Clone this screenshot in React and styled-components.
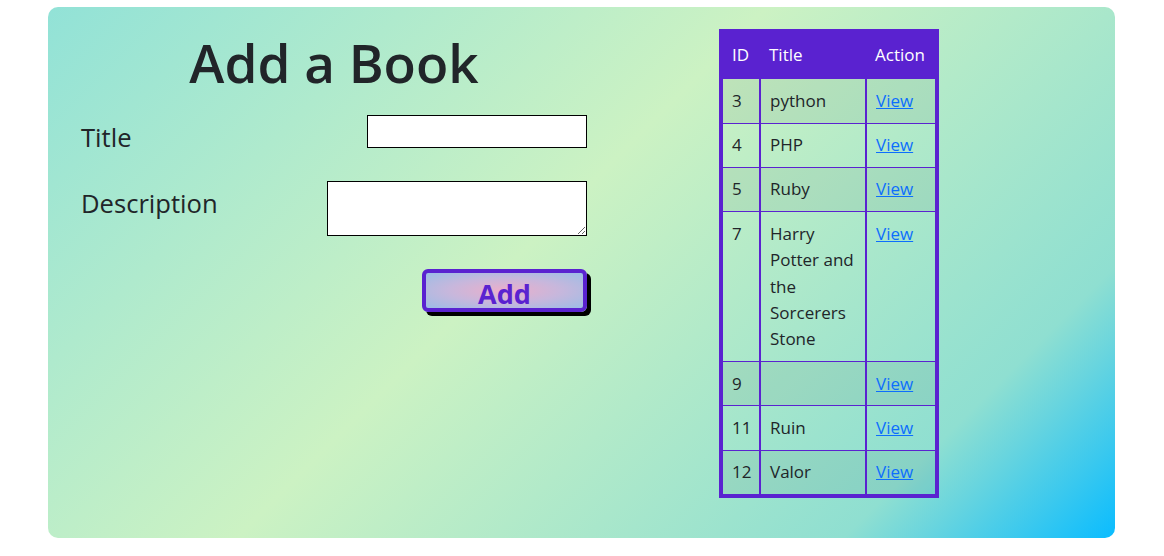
import React from "react";
import styled, { createGlobalStyle } from "styled-components";

const Global = createGlobalStyle`
  html, body { margin: 0; padding: 0; background: #ffffff; }
  body { font-family: "Open Sans", "Noto Sans", sans-serif; color: #212529; }
  * { box-sizing: border-box; }
`;

const Page = styled.div`
  padding: 7px 49px 18px 48px;
`;

const Card = styled.div`
  display: flex;
  align-items: flex-start;
  height: 531px;
  border-radius: 10px;
  background: linear-gradient(135deg, #92e2d7 0%, #ccf2c3 45%, #8fdfd1 83%, #0abcff 100%);
`;

const FormColumn = styled.div`
  display: flex;
  flex-direction: column;
  width: 506px;
  margin-left: 33px;
  padding-top: 22px;
`;

const Heading = styled.h1`
  margin: 0;
  font-size: 53px;
  line-height: 68px;
  font-weight: 600;
  text-align: center;
  color: #212529;
`;

const FieldRow = styled.div`
  display: flex;
  justify-content: space-between;
  align-items: flex-start;
  margin-top: ${(p) => p.$gap}px;
`;

const Label = styled.label`
  padding-top: 7px;
  font-size: 25.6px;
  line-height: 31px;
  color: #212529;
`;

const TextInput = styled.input`
  width: 220px;
  height: 33px;
  border: 1px solid #000;
  border-radius: 0;
  background: #fff;
  padding: 2px 4px;
  font: inherit;
  font-size: 16px;
`;

const TextArea = styled.textarea`
  width: 260px;
  height: 55px;
  border: 1px solid #000;
  border-radius: 0;
  background: #fff;
  padding: 2px 4px;
  font: inherit;
  font-size: 16px;
  display: block;
`;

const AddButton = styled.button`
  align-self: flex-end;
  margin-top: 33px;
  width: 165px;
  height: 43px;
  border: 4px solid #5a22d0;
  border-radius: 6px;
  background: radial-gradient(ellipse at center, #ebafca 0%, #c7b7dc 50%, #9bbde6 100%);
  box-shadow: 4px 4px 0 #000;
  color: #5a22d0;
  font-family: "Open Sans", "Noto Sans", sans-serif;
  font-weight: 700;
  font-size: 27px;
  line-height: 1;
  padding: 5px 0 0;
  cursor: pointer;
`;

const TableColumn = styled.div`
  margin-left: 132px;
  margin-top: 22px;
`;

const TableFrame = styled.div`
  width: 220px;
  border: 4px solid #5a22d0;
`;

const Table = styled.table`
  width: 212px;
  border-collapse: collapse;
  table-layout: fixed;
  font-size: 17px;
  line-height: 26.4px;
`;

const HeadCell = styled.th`
  width: ${(p) => p.$w}px;
  background: #5a22d0;
  color: #fff;
  font-weight: 400;
  text-align: left;
  padding: 9px 8px 10px 9px;
  vertical-align: top;
`;

const Row = styled.tr`
  background: ${(p) => (p.$striped ? "rgba(0, 0, 0, 0.055)" : "transparent")};
  & > td { border-top: 1px solid #5a22d0; }
`;

const Cell = styled.td`
  padding: 8.45px 8px 8.45px 9px;
  vertical-align: top;
  color: #212529;
  & + & { border-left: 2px solid #5a22d0; }
`;

const ViewLink = styled.a`
  color: #0d6efd;
  text-decoration: underline;
`;

const books = [
  { id: 3, title: "python" },
  { id: 4, title: "PHP" },
  { id: 5, title: "Ruby" },
  { id: 7, title: "Harry Potter and the Sorcerers Stone" },
  { id: 9, title: "" },
  { id: 11, title: "Ruin" },
  { id: 12, title: "Valor" },
];

export default function App() {
  return (
    <>
      <Global />
      <Page>
        <Card>
          <FormColumn>
            <Heading>Add a Book</Heading>
            <FieldRow $gap={18}>
              <Label>Title</Label>
              <TextInput type="text" />
            </FieldRow>
            <FieldRow $gap={28}>
              <Label>Description</Label>
              <TextArea />
            </FieldRow>
            <AddButton type="button">Add</AddButton>
          </FormColumn>
          <TableColumn>
            <TableFrame>
              <Table>
                <thead>
                  <tr>
                    <HeadCell $w={37}>ID</HeadCell>
                    <HeadCell $w={106}>Title</HeadCell>
                    <HeadCell $w={69}>Action</HeadCell>
                  </tr>
                </thead>
                <tbody>
                  {books.map((b, i) => (
                    <Row key={b.id} $striped={i % 2 === 0}>
                      <Cell>{b.id}</Cell>
                      <Cell>{b.title}</Cell>
                      <Cell>
                        <ViewLink href="#">View</ViewLink>
                      </Cell>
                    </Row>
                  ))}
                </tbody>
              </Table>
            </TableFrame>
          </TableColumn>
        </Card>
      </Page>
    </>
  );
}
